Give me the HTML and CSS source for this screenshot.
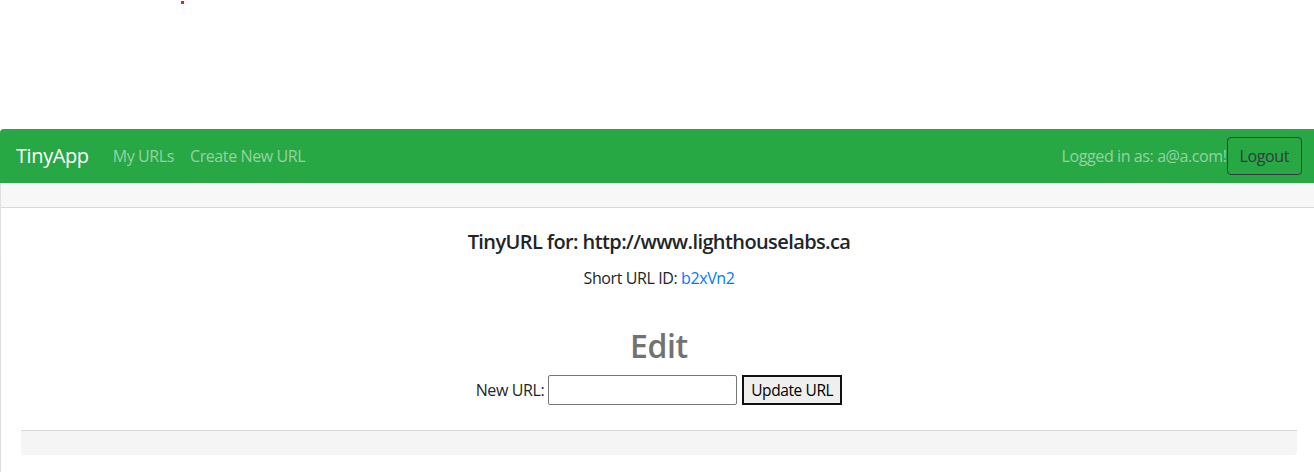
FILE: index.html
```html
<!DOCTYPE html>
<html lang="en">
<head>
<meta charset="utf-8">
<title>TinyApp</title>
<link rel="stylesheet" href="styles.css">
</head>
<body>
<div class="page">
  <div class="top-space"><span class="dot"></span></div>
  <div class="card">
    <nav class="navbar">
      <div class="nav-left">
        <a class="brand" href="#">TinyApp</a>
        <a class="nav-link" href="#">My URLs</a>
        <a class="nav-link" href="#">Create New URL</a>
      </div>
      <div class="nav-right">
        <span class="login-text">Logged in as: a@a.com!</span>
        <button class="btn-logout" type="button">Logout</button>
      </div>
    </nav>
    <div class="card-header"></div>
    <div class="card-body">
      <h5 class="card-title">TinyURL for: http://www.lighthouselabs.ca</h5>
      <p class="card-text">Short URL ID: <a href="#">b2xVn2</a></p>
      <h2 class="edit-title">Edit</h2>
      <form class="edit-form">
        <label for="newurl">New URL:</label>
        <input id="newurl" class="url-input" type="text">
        <button class="btn-update" type="button">Update URL</button>
      </form>
      <div class="card-footer"></div>
    </div>
  </div>
</div>
</body>
</html>
```

FILE: styles.css
```css
html, body {
  margin: 0;
  padding: 0;
  overflow: hidden;
  background: #fff;
}
body {
  font-family: "Open Sans", "Noto Sans", sans-serif;
  font-size: 16px;
  line-height: 1.5;
  letter-spacing: -0.025em;
  color: #212529;
}
.page {
  width: 1314px;
  height: 472px;
  overflow: hidden;
}
.top-space {
  position: relative;
  height: 129px;
}
.dot {
  position: absolute;
  left: 181px;
  top: 1px;
  width: 3px;
  height: 3px;
  background: #ec1c24;
}
.card {
  width: 1318px;
  box-sizing: border-box;
  border: 1px solid rgba(0,0,0,.125);
  border-top: none;
  border-radius: 4px;
}
.navbar {
  display: flex;
  align-items: center;
  justify-content: space-between;
  background: #28a745;
  padding: 8px 16px;
  margin: 0 -1px;
  border-radius: 4px 4px 0 0;
}
.nav-left, .nav-right {
  display: flex;
  align-items: center;
}
.brand {
  color: #fff;
  font-size: 20px;
  line-height: 30px;
  text-decoration: none;
  margin-right: 16px;
}
.nav-link {
  color: rgba(255,255,255,.5);
  text-decoration: none;
  padding: 0 8px;
}
.login-text {
  color: rgba(255,255,255,.5);
}
.btn-logout {
  font-family: inherit;
  font-size: 16px;
  letter-spacing: inherit;
  line-height: 24px;
  color: #343a40;
  background: transparent;
  border: 1px solid #343a40;
  border-radius: 4px;
  padding: 6px 12px;
}
.card-header {
  height: 24px;
  background: #f7f7f7;
  border-bottom: 1px solid rgba(0,0,0,.125);
}
.card-body {
  padding: 20px;
  text-align: center;
}
.card-title {
  font-size: 20px;
  font-weight: 600;
  line-height: 24px;
  letter-spacing: -0.03em;
  margin: 2px 0 12px;
}
.card-text {
  margin: 0 0 16px;
}
.card-text a {
  color: #007bff;
  text-decoration: none;
}
.edit-title {
  font-size: 32px;
  font-weight: 600;
  line-height: 38px;
  color: #727272;
  margin: 37px 0 10px;
}
.edit-form {
  display: flex;
  justify-content: center;
  align-items: center;
  gap: 4px;
  margin: 0 0 25px;
}
.url-input {
  width: 185px;
  height: 26px;
  border: 1px solid #767676;
  border-radius: 2px;
  padding: 1px;
  margin-right: 1px;
}
.btn-update {
  font-family: inherit;
  font-size: 15.5px;
  letter-spacing: inherit;
  height: 30px;
  padding: 0 7px;
  background: #efefef;
  border: 2px solid #111;
  color: #000;
}
.card-footer {
  height: 24px;
  background: #f5f5f5;
  border-top: 1px solid rgba(0,0,0,.125);
  border-radius: 0 0 4px 4px;
}
```
